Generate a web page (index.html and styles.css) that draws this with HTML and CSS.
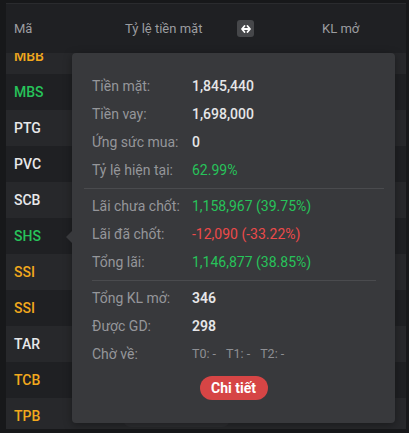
FILE: index.html
```html
<!DOCTYPE html>
<html lang="vi">
<head>
  <meta charset="UTF-8" />
  <meta name="viewport" content="width=device-width, initial-scale=1.0"/>
  <title>Danh mục</title>
  <link rel="stylesheet" href="styles.css">
</head>
<body>
  <div class="board">
    <div class="table">
      <div class="head">
        <div class="col-code">Mã</div>
        <div class="col-rate">Tỷ lệ tiền mặt</div>
        <div class="col-swap">
          <span class="swap-btn">
            <svg width="10" height="8" viewBox="0 0 10 8"><path d="M3.5 1 L1 4 L3.5 7 M6.5 1 L9 4 L6.5 7 M1.5 4 H8.5" stroke="#fff" stroke-width="1.8" fill="none" stroke-linecap="round" stroke-linejoin="round"/></svg>
          </span>
        </div>
        <div class="col-vol">KL mở</div>
      </div>
      <div class="rows">
        <div class="list">
          <div class="row"><span class="code ref">MBB</span></div>
          <div class="row"><span class="code up">MBS</span></div>
          <div class="row"><span class="code">PTG</span></div>
          <div class="row"><span class="code">PVC</span></div>
          <div class="row"><span class="code">SCB</span></div>
          <div class="row"><span class="code up">SHS</span></div>
          <div class="row"><span class="code ref">SSI</span></div>
          <div class="row"><span class="code ref">SSI</span></div>
          <div class="row"><span class="code">TAR</span></div>
          <div class="row"><span class="code ref">TCB</span></div>
          <div class="row"><span class="code ref">TPB</span></div>
        </div>
      </div>
    </div>

    <div class="ghost"></div>

    <!-- popup chi tiết cho dòng SHS -->
    <div class="popup">
      <div class="popup-arrow"></div>
      <div class="line"><span class="label">Tiền mặt:</span><span class="value">1,845,440</span></div>
      <div class="line"><span class="label">Tiền vay:</span><span class="value">1,698,000</span></div>
      <div class="line"><span class="label">Ứng sức mua:</span><span class="value">0</span></div>
      <div class="line"><span class="label">Tỷ lệ hiện tại:</span><span class="value up">62.99%</span></div>
      <div class="sep sep-wide"></div>
      <div class="line"><span class="label">Lãi chưa chốt:</span><span class="value up">1,158,967 (39.75%)</span></div>
      <div class="line"><span class="label">Lãi đã chốt:</span><span class="value down">-12,090 (-33.22%)</span></div>
      <div class="line"><span class="label">Tổng lãi:</span><span class="value up">1,146,877 (38.85%)</span></div>
      <div class="sep"></div>
      <div class="line"><span class="label">Tổng KL mở:</span><span class="value strong">346</span></div>
      <div class="line"><span class="label">Được GD:</span><span class="value strong">298</span></div>
      <div class="line"><span class="label">Chờ về:</span><span class="pending"><span>T0: -</span><span>T1: -</span><span>T2: -</span></span></div>
      <div class="actions"><button class="detail-btn">Chi tiết</button></div>
    </div>
  </div>
</body>
</html>
```

FILE: styles.css
```css
* {
  box-sizing: border-box;
}
body {
  margin: 0;
  background: #17181a;
  font-family: Roboto, "Noto Sans", sans-serif;
  font-size: 14px;
  color: #e4e4e6;
}
.board {
  position: relative;
  width: 409px;
  height: 433px;
  overflow: hidden;
  padding: 3px 3px 0 6px;
}
.table {
  width: 400px;
}
.head {
  display: flex;
  align-items: center;
  height: 50px;
  background: #1f2023;
  border-top: 1px solid #2a2b2e;
  color: #9c9da0;
  font-size: 13px;
}
.col-code {
  width: 119px;
  padding-left: 8px;
}
.col-rate {
  width: 112px;
}
.col-swap {
  width: 85px;
  display: flex;
}
.swap-btn {
  width: 17px;
  height: 17px;
  border-radius: 3px;
  background: #46474a;
  display: flex;
  align-items: center;
  justify-content: center;
}
.col-vol {
  flex: 1;
}
.rows {
  height: 376px;
  overflow: hidden;
}
.list {
  margin-top: -15px;
}
.row {
  height: 36px;
  display: flex;
  align-items: center;
  padding-left: 8px;
  background: #27282b;
}
.row:nth-child(even) {
  background: #1f2023;
}
.code {
  font-weight: 500;
  font-size: 14px;
  color: #e8e8ea;
}
.code.ref {
  color: #f2a81d;
}
.up {
  color: #27c35a;
}
.down {
  color: #ec4a4a;
}
.code.up {
  color: #27c35a;
}
.ghost {
  position: absolute;
  left: 123px;
  top: 380px;
  width: 107px;
  height: 47px;
  border-radius: 8px;
  background: #2d2e31;
}
.popup {
  position: absolute;
  left: 72px;
  top: 53px;
  width: 323px;
  height: 370px;
  background: #38393c;
  border-radius: 4px;
  padding: 19px 0 0 20px;
  box-shadow: 0 2px 8px rgba(0, 0, 0, 0.35);
}
.popup-arrow {
  position: absolute;
  left: -6px;
  top: 178px;
  width: 0;
  height: 0;
  border-top: 6px solid transparent;
  border-bottom: 6px solid transparent;
  border-right: 6px solid #38393c;
}
.line {
  display: flex;
  height: 28px;
  line-height: 28px;
}
.label {
  width: 100px;
  color: #95969a;
}
.value {
  font-weight: 500;
  color: #e6e6e8;
}
.value.up {
  color: #27c35a;
  font-weight: 400;
}
.value.down {
  color: #ec4a4a;
  font-weight: 400;
}
.value.strong {
  font-weight: 600;
}
.pending {
  display: flex;
  gap: 10px;
  font-size: 12.5px;
  color: #8e8f93;
}
.sep {
  height: 1px;
  background: #4a4b4e;
  margin: 4px 19px 3px 0;
}
.sep-wide {
  margin-left: -8px;
  margin-right: 11px;
}
.actions {
  display: flex;
  justify-content: center;
  margin: 8px 0 0 -20px;
}
.detail-btn {
  height: 24px;
  width: 68px;
  border: none;
  border-radius: 12px;
  background: #d64545;
  color: #fff;
  font-family: Roboto, "Noto Sans", sans-serif;
  font-weight: 700;
  font-size: 14px;
  padding: 0;
}
```
